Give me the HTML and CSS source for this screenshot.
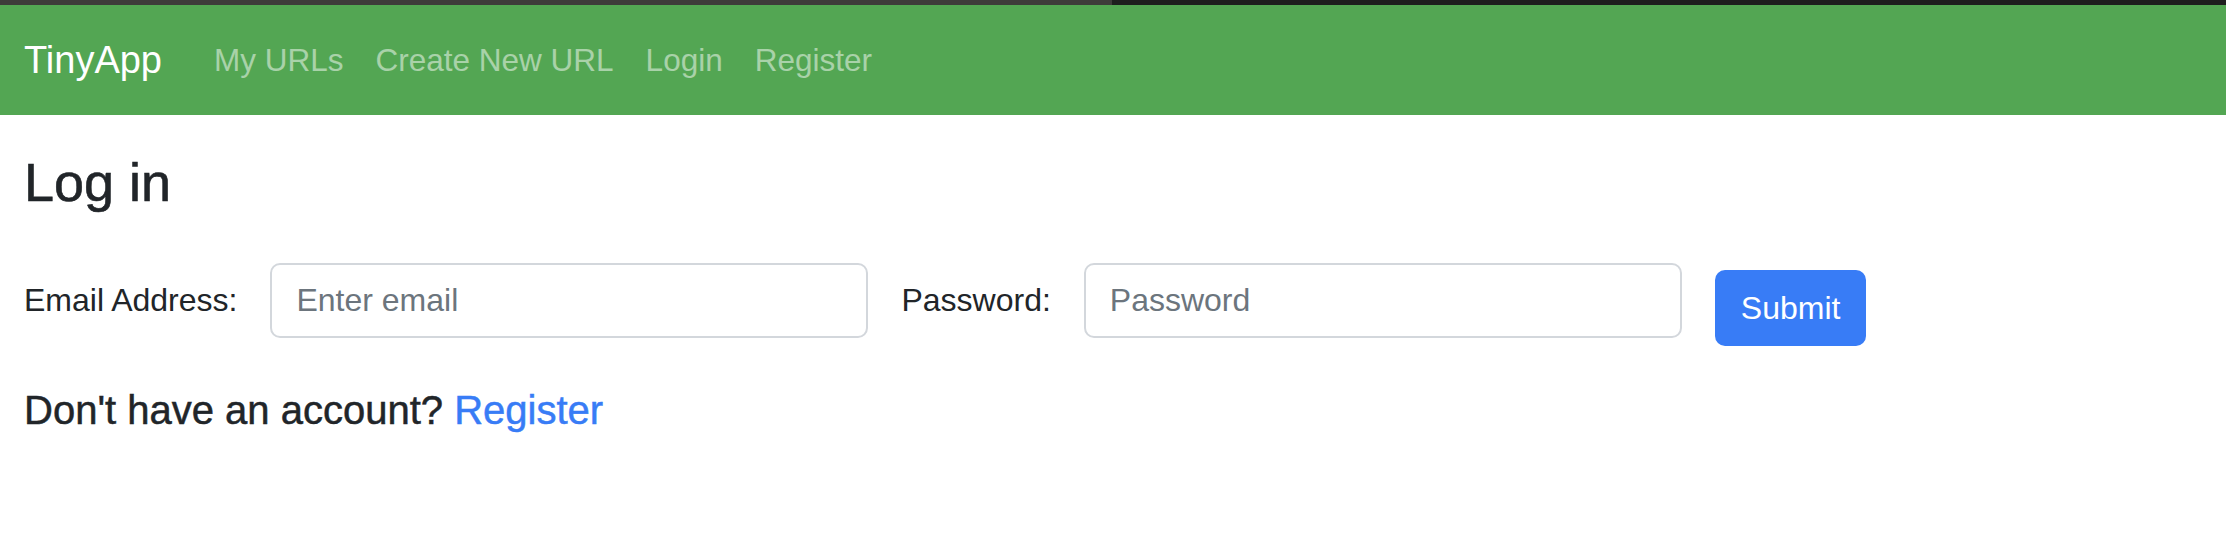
FILE: index.html
```html
<!DOCTYPE html>
<html lang="en">
<head>
<meta charset="utf-8">
<title>TinyApp - Log in</title>
<link rel="stylesheet" href="styles.css">
</head>
<body>
<div class="chrome">
  <div class="chrome-left"></div>
  <div class="chrome-right"></div>
</div>
<nav class="navbar">
  <a class="brand" href="#">TinyApp</a>
  <ul class="nav-links">
    <li><a href="#">My URLs</a></li>
    <li><a href="#">Create New URL</a></li>
    <li><a href="#">Login</a></li>
    <li><a href="#">Register</a></li>
  </ul>
</nav>
<main class="content">
  <h3 class="title">Log in</h3>
  <form class="login-form">
    <label class="field-label" for="email">Email Address:</label>
    <input class="field-input" id="email" type="email" placeholder="Enter email">
    <label class="field-label" for="password">Password:</label>
    <input class="field-input" id="password" type="password" placeholder="Password">
    <button class="btn-submit" type="button">Submit</button>
  </form>
  <h5 class="register-note">Don't have an account? <a href="#">Register</a></h5>
</main>
</body>
</html>
```

FILE: styles.css
```css
html, body {
  margin: 0;
  padding: 0;
  background: #ffffff;
}

body {
  font-family: "Liberation Sans", Arial, Helvetica, sans-serif;
  color: #212529;
  font-size: 32px;
}

.chrome {
  display: flex;
  height: 5px;
}

.chrome-left {
  width: 1112px;
  background: #3e3b3a;
}

.chrome-right {
  flex: 1;
  background: #1e1e1e;
}

.navbar {
  display: flex;
  align-items: center;
  height: 110px;
  padding: 0 24px;
  background: #53a653;
  box-sizing: border-box;
}

.brand {
  color: #ffffff;
  font-size: 38px;
  text-decoration: none;
  margin-right: 36px;
}

.nav-links {
  display: flex;
  list-style: none;
  margin: 0;
  padding: 0;
}

.nav-links a {
  display: block;
  padding: 0 16px;
  font-size: 31.5px;
  color: rgba(255, 255, 255, 0.5);
  text-decoration: none;
}

.content {
  padding: 0 24px;
}

.title {
  margin: 34px 0 0;
  font-size: 54px;
  font-weight: normal;
  line-height: 67px;
  -webkit-text-stroke: 0.6px #212529;
}

.login-form {
  display: flex;
  align-items: center;
  gap: 33px;
  margin-top: 38px;
}

.field-label {
  font-size: 32px;
  line-height: 40px;
}

.field-input {
  width: 598px;
  height: 75px;
  box-sizing: border-box;
  padding: 0 24px;
  border: 2px solid #d3d7dc;
  border-radius: 10px;
  font-family: inherit;
  font-size: 32px;
  color: #212529;
  outline: none;
}

.field-input::placeholder {
  color: #6c757d;
}

.btn-submit {
  height: 76px;
  margin-top: 16px;
  padding: 0 26px;
  border: none;
  border-radius: 10px;
  background: #387cf6;
  color: #ffffff;
  font-family: inherit;
  font-size: 32px;
}

.register-note {
  margin: 40px 0 0;
  font-size: 40px;
  font-weight: normal;
  line-height: 48px;
  -webkit-text-stroke: 0.5px #212529;
}

.register-note a {
  color: #387cf6;
  text-decoration: none;
  -webkit-text-stroke: 0.5px #387cf6;
}
```
